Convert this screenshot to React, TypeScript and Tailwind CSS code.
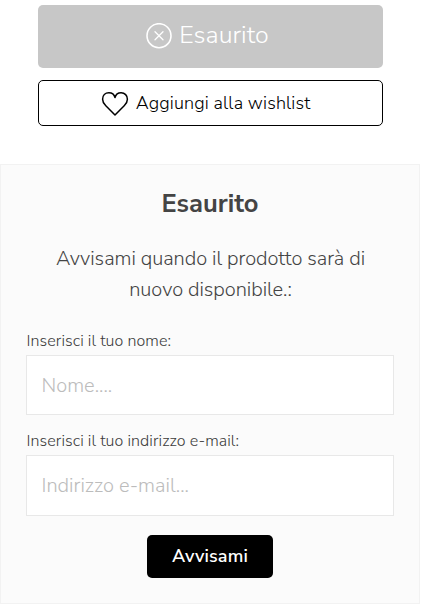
import { useState, type FormEvent } from "react";

function CircleXIcon() {
  return (
    <svg width="26" height="26" viewBox="0 0 26 26" fill="none" stroke="currentColor" strokeWidth="1.6" aria-hidden="true">
      <circle cx="13" cy="12.7" r="12" />
      <path d="M9 8.7l8 8M17 8.7l-8 8" strokeWidth="1.3" strokeLinecap="round" />
    </svg>
  );
}

function HeartIcon() {
  return (
    <svg width="28" height="26" viewBox="0 0 28 26" fill="none" stroke="currentColor" strokeWidth="1.5" strokeLinejoin="round" aria-hidden="true">
      <path d="M14 7.6C13.2 4.4 11 2.8 7.9 2.8 4.2 2.8 1.6 5.5 1.6 9.2c0 2.6 1.1 4.6 3.2 6.6L14 25l9.2-9.2c2.1-2 3.2-4 3.2-6.6 0-3.7-2.6-6.4-6.3-6.4-3.1 0-5.3 1.6-6.1 4.8z" />
    </svg>
  );
}

interface FieldProps {
  id: string;
  type: string;
  label: string;
  placeholder: string;
  value: string;
  inputClass: string;
  onChange: (value: string) => void;
}

function Field({ id, type, label, placeholder, value, inputClass, onChange }: FieldProps) {
  return (
    <div>
      <label htmlFor={id} className="block h-[26px] pl-[0.6px] text-base leading-[24px] font-light tracking-[0.07px] text-[#3c3c3c]">
        {label}
      </label>
      <input
        id={id}
        type={type}
        placeholder={placeholder}
        value={value}
        onChange={(e) => onChange(e.target.value)}
        className={`block w-full border border-[#e8e8e8] bg-white px-[14.5px] text-[20px] font-light text-[#444] outline-none placeholder:text-[#bcbcbc] ${inputClass}`}
      />
    </div>
  );
}

export default function App() {
  const [name, setName] = useState("");
  const [email, setEmail] = useState("");

  const handleSubmit = (e: FormEvent) => e.preventDefault();

  return (
    <main className="h-[605px] w-[423px] overflow-hidden bg-white pt-[5px] font-['Nunito_Sans','Nunito','Open_Sans',sans-serif]">
      {/* Product actions */}
      <div className="ml-[38px] flex w-[345px] flex-col gap-3">
        <button
          disabled
          className="flex h-[63px] items-center justify-center gap-[7px] rounded-[5px] bg-[#c7c7c7] pr-[6px] pb-px text-[25px] font-light text-white"
        >
          <CircleXIcon />
          <span className="tracking-[0.03px]">Esaurito</span>
        </button>
        <button className="flex h-[46px] items-center justify-center gap-[7px] rounded-[5px] border border-black pr-[10px] text-[18px] font-light text-black">
          <HeartIcon />
          <span className="tracking-[0.14px]">Aggiungi alla wishlist</span>
        </button>
      </div>

      {/* Back in stock form */}
      <form
        onSubmit={handleSubmit}
        className="mt-[38px] h-[440px] w-[420px] border border-[#f2f2f2] bg-[#fbfbfb] px-[25px] pt-[22px]"
      >
        <h4 className="text-center text-[25.5px] leading-[34px] font-bold text-[#444]">Esaurito</h4>
        <p className="mt-[22px] pl-px text-center text-[20px] leading-[31px] font-light tracking-[-0.05px] text-[#444]">
          Avvisami quando il prodotto sarà di
          <br />
          nuovo disponibile.:
        </p>
        <div className="mt-[24px] flex flex-col gap-[14px]">
          <Field
            id="name"
            type="text"
            label="Inserisci il tuo nome:"
            placeholder="Nome...."
            value={name}
            inputClass="h-[60px]"
            onChange={setName}
          />
          <Field
            id="email"
            type="email"
            label="Inserisci il tuo indirizzo e-mail:"
            placeholder="Indirizzo e-mail..."
            value={email}
            inputClass="h-[61px]"
            onChange={setEmail}
          />
        </div>
        <button className="mx-auto mt-[19px] block h-[43px] w-[126px] rounded-[5px] bg-black text-[18px] font-semibold tracking-[0.15px] text-white">
          Avvisami
        </button>
      </form>
    </main>
  );
}
